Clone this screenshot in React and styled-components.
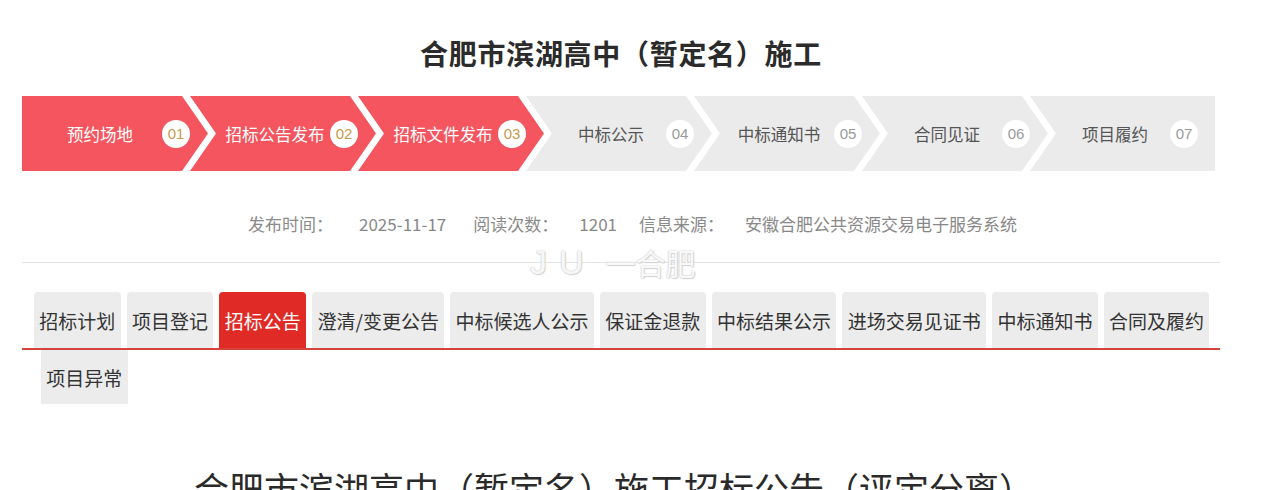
import React from "react";
import styled, { createGlobalStyle, css } from "styled-components";

const Global = createGlobalStyle`
  html, body { margin: 0; padding: 0; background: #fff; }
  body { font-family: "Noto Sans CJK SC", "Noto Sans", sans-serif; color: #333; }
`;

const Page = styled.div`
  width: 1198px;
  margin-left: 22px;
  height: 490px;
  overflow: hidden;
`;

const Title = styled.h1`
  margin: 0;
  padding-top: 33px;
  font-size: 28px;
  line-height: 40px;
  font-weight: 700;
  text-align: center;
  color: #2b2b2b;
  letter-spacing: 0.7px;
`;

const Steps = styled.div`
  display: flex;
  margin-top: 23px;
  height: 75px;
`;

const ARROW = 26;

const Step = styled.div`
  flex: none;
  width: ${(p) => (p.$last ? 185 : 186)}px;
  height: 75px;
  margin-left: ${(p) => (p.$first ? 0 : -18)}px;
  display: flex;
  align-items: center;
  padding-left: ${(p) => (p.$first ? 16 : 30)}px;
  box-sizing: border-box;
  background: ${(p) => (p.$active ? "#f4555f" : "#ebebeb")};
  ${(p) =>
    p.$first
      ? css`clip-path: polygon(0 0, calc(100% - ${ARROW}px) 0, 100% 50%, calc(100% - ${ARROW}px) 100%, 0 100%);`
      : p.$last
      ? css`clip-path: polygon(0 0, 100% 0, 100% 100%, 0 100%, ${ARROW}px 50%);`
      : css`clip-path: polygon(0 0, calc(100% - ${ARROW}px) 0, 100% 50%, calc(100% - ${ARROW}px) 100%, 0 100%, ${ARROW}px 50%);`}
`;

const StepLabel = styled.span`
  flex: 1;
  text-align: center;
  font-size: 16.5px;
  color: ${(p) => (p.$active ? "#fff" : "#555")};
  white-space: nowrap;
`;

const StepNum = styled.span`
  flex: none;
  width: 28px;
  height: 28px;
  margin-right: ${(p) => (p.$last ? 17 : 18)}px;
  border-radius: 50%;
  background: #fff;
  display: flex;
  align-items: center;
  justify-content: center;
  font-family: "Liberation Sans", Arial, sans-serif;
  font-size: 15px;
  color: ${(p) => (p.$active ? "#c99a4c" : "#9a9a9a")};
`;

const Meta = styled.div`
  display: flex;
  margin-top: 41px;
  padding-left: 226px;
  font-size: 17px;
  line-height: 24px;
  color: #8a8a8a;
  white-space: nowrap;
`;

const MetaItem = styled.span`
  display: flex;
  margin-right: ${(p) => p.$after ?? 22}px;
`;

const MetaValue = styled.span`
  margin-left: ${(p) => p.$gap}px;
  color: #888;
`;

const DividerWrap = styled.div`
  position: relative;
  margin-top: 26px;
  height: 1px;
  background: #e4e4e4;
`;

const Watermark = styled.div`
  position: absolute;
  left: 508px;
  top: -20px;
  display: flex;
  align-items: center;
  gap: 10px;
  font-size: 30px;
  line-height: 40px;
  color: rgba(255, 255, 255, 0.92);
  text-shadow: 0 0 1px #c4c4c4, 0 0 2px #d4d4d4, 1px 1px 1px #d6d6d6;
  pointer-events: none;
`;

const WmMark = styled.span`
  font-family: "Liberation Sans", Arial, sans-serif;
  font-size: 34px;
  color: rgba(255, 255, 255, 0.9);
  letter-spacing: 12px;
`;

const TabRow = styled.div`
  display: flex;
  gap: 6px;
  padding-left: ${(p) => p.$indent}px;
  ${(p) =>
    p.$underline &&
    css`
      margin-top: 29px;
      border-bottom: 2px solid #d8423c;
    `}
`;

const Tab = styled.div`
  flex: none;
  height: ${(p) => (p.$short ? 54 : 56)}px;
  padding: 0 5.35px;
  display: flex;
  align-items: center;
  font-size: 19px;
  white-space: nowrap;
  border-radius: ${(p) => (p.$short ? "0" : "4px 4px 0 0")};
  background: ${(p) => (p.$active ? "#df2a26" : "#ececec")};
  color: ${(p) => (p.$active ? "#fff" : "#333")};
`;

const Headline = styled.h2`
  margin: 60px 0 0;
  padding-right: 14px;
  font-size: 35px;
  line-height: 48px;
  font-weight: 400;
  text-align: center;
  color: #2a2a2a;
  white-space: nowrap;
`;

const steps = ["预约场地", "招标公告发布", "招标文件发布", "中标公示", "中标通知书", "合同见证", "项目履约"];
const tabs = ["招标计划", "项目登记", "招标公告", "澄清/变更公告", "中标候选人公示", "保证金退款", "中标结果公示", "进场交易见证书", "中标通知书", "合同及履约"];

export default function App() {
  return (
    <>
      <Global />
      <Page>
        <Title>合肥市滨湖高中（暂定名）施工</Title>
        <Steps>
          {steps.map((s, i) => {
            const active = i < 3;
            const last = i === steps.length - 1;
            return (
              <Step key={s} $first={i === 0} $last={last} $active={active}>
                <StepLabel $active={active}>{s}</StepLabel>
                <StepNum $active={active} $last={last}>{`0${i + 1}`}</StepNum>
              </Step>
            );
          })}
        </Steps>
        <Meta>
          <MetaItem $after={27}>发布时间：<MetaValue $gap={26}>2025-11-17</MetaValue></MetaItem>
          <MetaItem>阅读次数：<MetaValue $gap={21}>1201</MetaValue></MetaItem>
          <MetaItem>信息来源：<MetaValue $gap={21}>安徽合肥公共资源交易电子服务系统</MetaValue></MetaItem>
        </Meta>
        <DividerWrap>
          <Watermark>
            <WmMark>JU</WmMark>
            <span>一合肥</span>
          </Watermark>
        </DividerWrap>
        <TabRow $underline $indent={12}>
          {tabs.map((t) => (
            <Tab key={t} $active={t === "招标公告"}>{t}</Tab>
          ))}
        </TabRow>
        <TabRow $indent={19}>
          <Tab $short>项目异常</Tab>
        </TabRow>
        <Headline>合肥市滨湖高中（暂定名）施工招标公告（评定分离）</Headline>
      </Page>
    </>
  );
}
